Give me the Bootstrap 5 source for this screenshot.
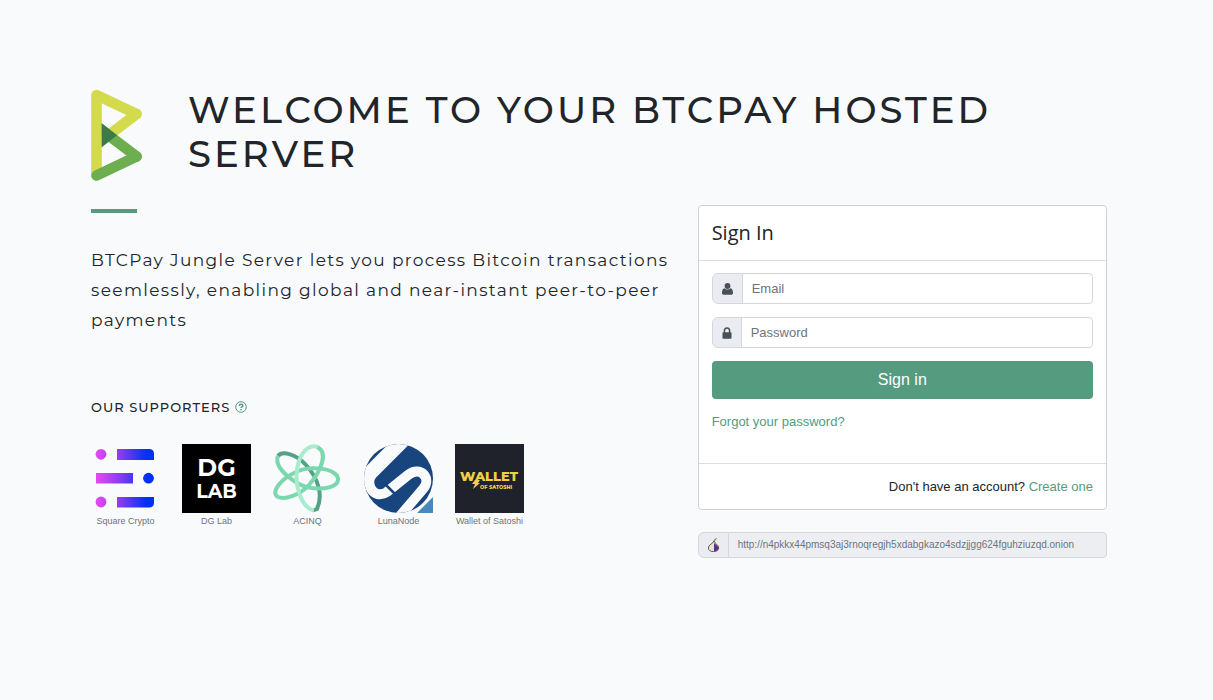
<!DOCTYPE html>
<html lang="en">
<head>
<meta charset="utf-8">
<meta name="viewport" content="width=device-width, initial-scale=1">
<title>BTCPay Server</title>
<link href="https://cdn.jsdelivr.net/npm/bootstrap@5.3.0/dist/css/bootstrap.min.css" rel="stylesheet">
<style>
  :root { --brand: #549b80; --field-line: #d3d7dd; --field-fill: #ebecf1; }
  body { background: #f8fafc; color: #212529; font-family: "Liberation Sans", Arial, sans-serif; font-size: 13px; }
  .page { padding: 88px 15px 40px 0; }
  .page > .container { max-width: 1040px; }
  a { color: var(--brand); text-decoration: none; }
  .display-face { font-family: Montserrat, Inter, sans-serif; font-weight: 500; }
  .masthead { gap: 46px; }
  .brand-mark { width: 51px; height: 93px; }
  .masthead h1 { font-size: 37px; line-height: 44px; letter-spacing: 3px; color: #212529; }
  .accent-bar { width: 46px; height: 4px; border: 0; opacity: 1; background: var(--brand); margin: 4px 0 32px; }
  .intro { font-size: 17px; font-weight: 400; line-height: 30px; letter-spacing: .08em; margin-bottom: 64px; }
  .supporters-title { font-size: 13px; line-height: 16px; letter-spacing: 1px; margin-bottom: 29px; }
  .supporters-title svg { vertical-align: -1px; }
  .supporters { gap: 22px; }
  .supporter { width: 69px; font-size: 9px; line-height: 17px; color: #6c757d; }
  .supporter svg { display: block; width: 69px; height: 69px; }
  .login { border-color: #d0d2d5; border-radius: 4px; }
  .login .card-header, .login .card-footer { background: #fff; border-color: #dcdee0; padding: 13px; }
  .login h4 { font: 400 20px/28px "Open Sans", sans-serif; }
  .login .card-body { padding: 12px 13px 31px; }
  .login .input-group, .login .btn { margin-bottom: 13px; }
  .input-group-text, .form-control { border-color: var(--field-line); font-size: 13px; line-height: 19px; }
  .input-group { border-radius: 4px; }
  .input-group-text { background: var(--field-fill); color: #495057; padding: 5px 9px; }
  .form-control { padding: 5px 9px; border-radius: 4px; }
  .form-control::placeholder { color: #6c757d; }
  .btn-brand { background: var(--brand); color: #fff; font-size: 16px; line-height: 24px; padding: 7px; border: 0; border-radius: 4px; }
  .btn-brand:hover { background: #46866e; color: #fff; }
  .login .card-footer { padding: 13px; line-height: 19px; }
  .onion { margin-top: 22px; }
  .onion .input-group-text { padding: 4px 8px; }
  .onion .form-control, .onion .form-control:focus { background: #edeef2; color: #6c757d; font-size: 10px; line-height: 16px; padding: 4px 9px; }
</style>
</head>
<body>
<main class="page">
  <div class="container">
    <header class="masthead d-flex align-items-start">
      <svg class="brand-mark flex-shrink-0" viewBox="0 0 51 93" aria-label="BTCPay">
        <defs><clipPath id="rightHalf"><path d="M10.800 0H51v93H10.800z"/></clipPath></defs>
        <g fill="none" stroke-width="10.600" stroke-linecap="round" stroke-linejoin="round">
          <path stroke="#d3db4d" d="M5.500 87V7l40 19"/>
          <g clip-path="url(#rightHalf)">
            <path stroke="#d3db4d" d="M45.500 26L5 56.800"/>
            <path stroke="#6cae50" d="M45.500 68.500L5 37.700"/>
          </g>
          <path stroke="#6cae50" d="M5.500 87.500l40-19"/>
        </g>
        <path fill="#3c7b48" d="M10.700 35.300L26 47.200 10.700 59.200z"/>
      </svg>
      <h1 class="display-face text-uppercase mb-0">Welcome to your BTCPay hosted server</h1>
    </header>
    <div class="row mt-4">
      <section class="col-md-7">
        <hr class="accent-bar">
        <p class="intro display-face">BTCPay Jungle Server lets you process Bitcoin transactions seemlessly, enabling global and near-instant peer-to-peer payments</p>
        <h2 class="supporters-title display-face text-uppercase">Our supporters
          <a href="#" aria-label="About supporters"><svg width="12" height="12" viewBox="0 0 12 12" fill="none" stroke="currentColor"><circle cx="6" cy="6" r="5.300"/><path stroke-width="1.500" d="M4.200 4.700c.2-2 3.700-1.900 3.600 0 0 1.100-1.800 1.100-1.800 2.400M6 8v1.300"/></svg></a>
        </h2>
        <div class="supporters d-flex flex-wrap text-center">
          <div class="supporter text-nowrap">
            <svg viewBox="0 0 69 69"><defs><linearGradient id="sq" gradientUnits="userSpaceOnUse" x1="5" y1="0" x2="56" y2="0"><stop stop-color="#e64af0"/><stop offset=".450" stop-color="#8d3df0"/><stop offset="1" stop-color="#0030f5"/></linearGradient></defs>
              <g fill="url(#sq)"><circle cx="10" cy="10.300" r="5.400"/><path d="M26 5h32q5 0 5 5v6H26zM5 29h37v10.500H5z"/><circle cx="10" cy="58" r="5.400"/><path d="M26 53h37v5.500q0 5-5 5H26z"/><circle cx="57.500" cy="34.200" r="5.400"/></g></svg>
            Square Crypto
          </div>
          <div class="supporter">
            <svg viewBox="0 0 69 69"><path d="M0 0h69v69H0z"/>
              <g fill="#fff" font-family="Montserrat, sans-serif" font-weight="700" text-anchor="middle"><text x="34.500" y="32" font-size="24">DG</text><text x="34.500" y="54" font-size="19">LAB</text></g></svg>
            DG Lab
          </div>
          <div class="supporter">
            <svg viewBox="0 0 69 69"><g fill="none" stroke-width="4">
              <path stroke="#55a184" d="M5 12C9 7 22 9 33 21c13 14 17 31 11 44l-4 1.500"/>
              <path stroke="#7bd7af" d="M5 53C-3 48 8 35 23 28c12-6 31-4 38 1 5 3 5 8 2 11-7 6-26 6-37 0C14 33 1 22 5 12"/>
              <path stroke="#7bd7af" d="M44 3c12 5 4 24-8 38-9 10-24 15-31 12"/>
              <path stroke="#a9eccd" d="M41 66.500C28 64 19 38 26 17 30 6 37 0 45 3"/></g></svg>
            ACINQ
          </div>
          <div class="supporter">
            <svg viewBox="0 0 69 69"><defs><clipPath id="moon"><circle cx="34.500" cy="34.500" r="34.500"/></clipPath></defs>
              <g clip-path="url(#moon)"><path fill="#18457d" d="M0 0h69v69H0z"/>
                <g fill="none"><path stroke="#f8fafc" stroke-width="15" d="M40-5L-3 38"/><path stroke="#f8fafc" stroke-width="10" d="M12 25C-3 38 10 57 23 48l21-17c13-10 24 4 15 14L36 72"/><path stroke="#18457d" stroke-width="2.500" d="M22 41l12 12"/></g></g>
              <path fill="#4a87bd" d="M69 53v16H53z"/></svg>
            LunaNode
          </div>
          <div class="supporter text-nowrap">
            <svg viewBox="0 0 69 69"><path fill="#1f222b" d="M0 0h69v69H0z"/>
              <g fill="#f3cf47" font-family="Montserrat, sans-serif" font-weight="800"><text x="34" y="37" font-size="13" text-anchor="middle">WALLET</text><text x="25" y="45" font-size="5">OF SATOSHI</text><path d="M20 36h5l-2 3h2l-7 6 2-5h-3z"/></g></svg>
            Wallet of Satoshi
          </div>
        </div>
      </section>
      <section class="col-md-5">
        <form class="login card">
          <div class="card-header"><h4 class="mb-0">Sign In</h4></div>
          <div class="card-body">
            <div class="input-group">
              <label class="input-group-text" for="email" aria-label="Email"><svg width="11" height="12" viewBox="0 0 11 12" fill="currentColor"><circle cx="5.500" cy="3" r="2.900"/><path d="M2.300 5.200c2 1.700 4.400 1.700 6.400 0C10.200 5.500 11 7.500 11 10c0 1.200-.7 1.800-1.800 1.800H1.800C.7 11.800 0 11.200 0 10c0-2.500.8-4.500 2.300-4.800z"/></svg></label>
              <input class="form-control" id="email" type="email" placeholder="Email">
            </div>
            <div class="input-group">
              <label class="input-group-text" for="password" aria-label="Password"><svg width="10" height="12" viewBox="0 0 10 12"><path fill="none" stroke="currentColor" stroke-width="1.500" d="M2.400 6V3.800c0-3.900 5.200-3.900 5.200 0V6"/><rect x=".5" y="5.300" width="9" height="6.400" rx=".7" fill="currentColor"/></svg></label>
              <input class="form-control" id="password" type="password" placeholder="Password">
            </div>
            <button class="btn btn-brand d-block w-100" type="submit">Sign in</button>
            <a href="#">Forgot your password?</a>
          </div>
          <div class="card-footer text-end">Don't have an account? <a href="#">Create one</a></div>
        </form>
        <div class="onion input-group">
          <label class="input-group-text" for="tor" aria-label="Tor address"><svg width="13" height="14" viewBox="0 0 13 14"><path fill="none" stroke="#6cae50" stroke-width="1.400" d="M6.500 5C6.500 2 8 1.500 9.500.5"/><path fill="#e6e5d0" stroke="#3b3540" stroke-width=".8" d="M6.500 3.500c0 2-5.200 3-5.200 6.500 0 2.300 2.300 3.600 5.200 3.600s5.200-1.300 5.200-3.600c0-3.500-4.200-4.500-4.200-6.500z"/><path fill="#5d2f86" d="M7 4.500c.3 2 4.400 2.500 4.400 5.500 0 2-1.900 3.300-4.400 3.300z"/></svg></label>
          <input class="form-control" id="tor" type="text" readonly value="http://n4pkkx44pmsq3aj3rnoqregjh5xdabgkazo4sdzjjgg624fguhziuzqd.onion">
        </div>
      </section>
    </div>
  </div>
</main>
<script src="https://cdn.jsdelivr.net/npm/bootstrap@5.3.0/dist/js/bootstrap.bundle.min.js"></script>
</body>
</html>
